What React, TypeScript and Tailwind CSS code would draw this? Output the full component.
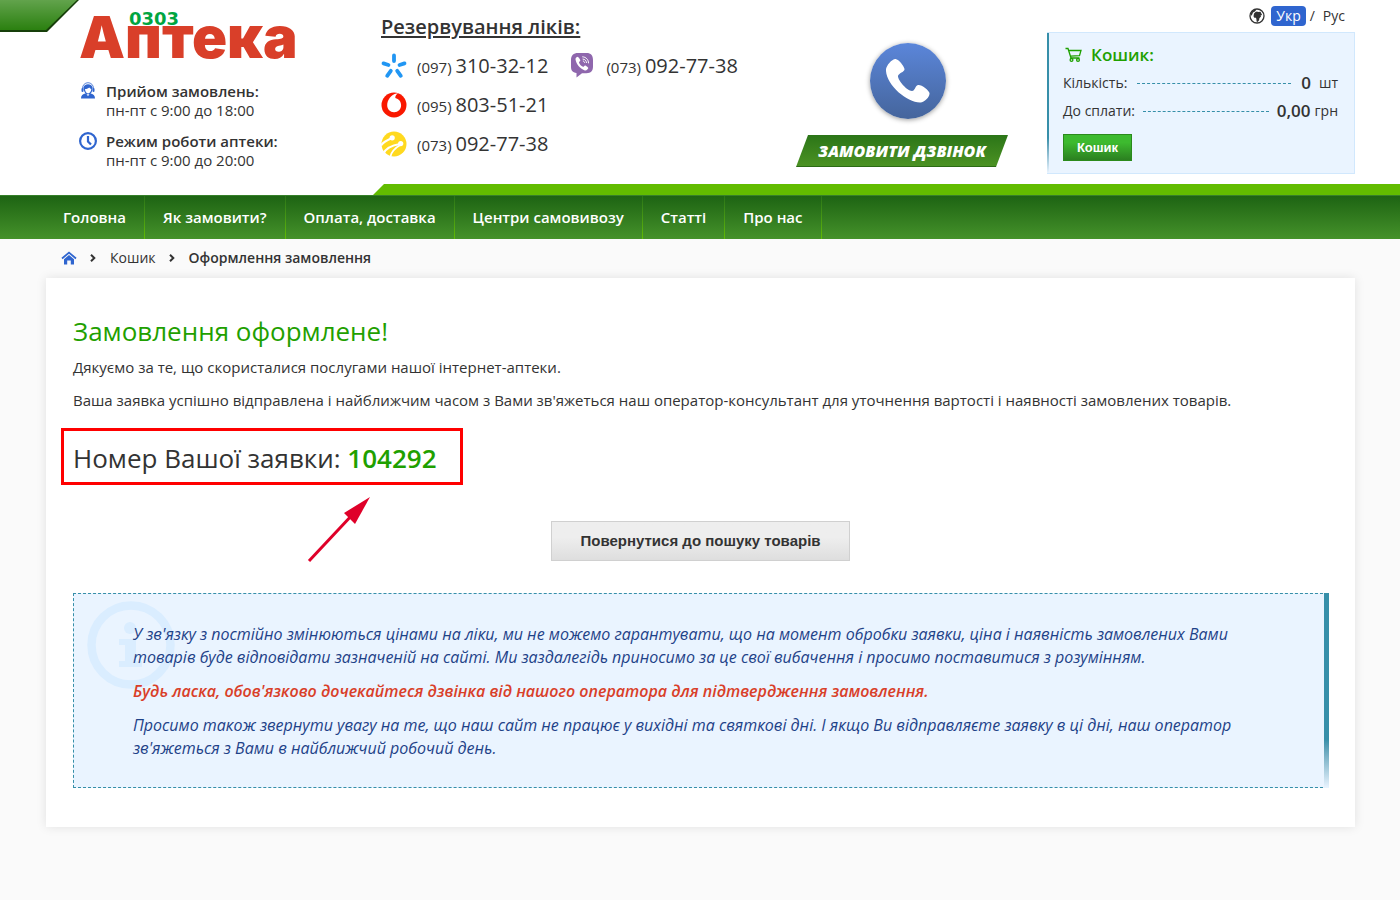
import { ReactNode } from 'react';

const navLinks = ['Головна', 'Як замовити?', 'Оплата, доставка', 'Центри самовивозу', 'Статті', 'Про нас'];

interface PhoneProps {
  icon: ReactNode;
  code: string;
  number: string;
}

function Phone({ icon, code, number }: PhoneProps) {
  return (
    <a href={`tel:${code}${number}`} className="flex h-[39px] items-center">
      <span className="w-9">{icon}</span>
      <span className="text-[15px]">
        ({code}) <span className="text-xl">{number}</span>
      </span>
    </a>
  );
}

function KyivstarIcon() {
  return (
    <svg width="26" height="26" viewBox="0 0 26 26" stroke="#2196f3" strokeWidth="3.8" strokeLinecap="round">
      <path d="M13 2.5v5.5M2.5 10.4l5 1.6M23.5 10.4l-5 1.6M9.8 17.8l-3.6 5M16.2 17.8l3.6 5" />
    </svg>
  );
}

function VodafoneIcon() {
  return (
    <svg width="26" height="26" viewBox="0 0 26 26">
      <circle cx="13" cy="13" r="12.5" fill="#f91800" />
      <path
        d="M13.2 20.2C9.3 20.3 6.2 17.3 6.2 13.2c0-5.3 4-10.8 9.3-11.7.8-.1 1.3 0 1.8.1-1.7.4-3.1 2.1-3 4.300 3.500.9 5.800 3.500 5.800 7.300 0 4.200-3 6.900-6.900 7z"
        fill="#fff"
      />
    </svg>
  );
}

function LifecellIcon() {
  return (
    <svg width="26" height="26" viewBox="0 0 26 26" fill="none">
      <circle cx="13" cy="13" r="12.5" fill="#ffd91f" />
      <path d="M0 14.5C2 11 5.500 9.500 11 7" stroke="#fff" strokeWidth="2.2" />
      <path d="M2.5 22.5C5 17 10 14.500 19 13" stroke="#fff" strokeWidth="2.2" />
      <path d="M9.5 25.5C10.500 20 14 17 20 13.500" stroke="#fff" strokeWidth="1.8" />
      <circle cx="11.2" cy="6.8" r="2.6" fill="#fff" />
      <circle cx="19.7" cy="12.6" r="2.6" fill="#fff" />
    </svg>
  );
}

function ViberIcon() {
  return (
    <svg width="26" height="26" viewBox="0 0 26 26" fill="none">
      <path
        d="M8 0h8.500C21 0 23 2.500 23 7v6.500c0 4.500-2 6.500-6.500 6.700h-4.500L6.500 24.500v-4.500C2.500 19.500 1 17.500 1 13.500V7c0-4.500 2.500-7 7-7z"
        fill="#8f67ad"
      />
      <path
        d="M7.500 3.700c-1.200.4-2.200 1.600-2 2.900 1 5 4 8.700 9.300 10.800 1.500.5 3.300-1 3.500-2.300.1-.8-2.500-2.700-3.200-2.700-.9.100-1.200 1.500-2.100 1.300-2-.7-3.500-2.300-4-4.200-.2-.9 1.300-1.200 1.300-2.100.1-.8-1.900-3.700-2.800-3.700z"
        fill="#fff"
      />
      <path d="M12.300 3.800c3.700.2 6.200 2.700 6.200 6.500M12.600 6c2.400.2 3.800 1.700 3.900 4M12.900 8c1 .1 1.600.8 1.700 1.800" stroke="#fff" />
    </svg>
  );
}

function OperatorIcon() {
  return (
    <svg width="18" height="18" viewBox="0 0 18 18" fill="#2f65cf">
      <path d="M2 16.500c0-3 1.500-4.500 5-5.200l2 3 2-3c3.500.7 5 2.200 5 5.200z" />
      <path d="M4.500 5.500C5 3 7 2.300 9 2.300s4 .7 4.500 3.200c.2 3-1 5.800-2.800 6.700H7.500C5.600 11 4.300 8 4.500 5.500z" />
      <path d="M6 7c2 0 3.500-.6 4.300-1.500.5.800 1.200 1.200 2 1.400-.2 2.300-1.400 4.400-3.200 4.500C7.300 11.400 6.100 9.300 6 7z" fill="#fff" />
      <path d="M3.500 6.500C3.500 3 6 .7 9 .7s5.500 2.300 5.500 5.800" fill="none" stroke="#2f65cf" strokeWidth=".8" />
      <rect x="2.5" y="6" width="2" height="4" rx="1" />
      <rect x="13.5" y="6" width="2" height="4" rx="1" />
    </svg>
  );
}

function ClockIcon() {
  return (
    <svg width="18" height="18" viewBox="0 0 18 18" fill="none" stroke="#2f65cf" strokeWidth="2.2">
      <circle cx="9" cy="9" r="7.9" />
      <path d="M9 4v5.500l3 3" />
    </svg>
  );
}

function GlobeIcon() {
  return (
    <svg width="16" height="16" viewBox="0 0 16 16" fill="#333">
      <circle cx="8" cy="8" r="7" fill="#fff" stroke="#333" strokeWidth="1.3" />
      <path d="M6.500 4 8 3.500l1 .5 2.500-.2 1.700 3.400-1.500-.3.300 1.600-1.600 1.700-.3 2-1.500 1.800-1-.4-.2-2.500-.5-1.300H5.300L4.500 8.200 5 5.500z" />
      <path d="M1.500 6 3 3.200 6 1.500l1 1-1.500 1.200L4 4.500 3.200 6.500 2 8z" />
    </svg>
  );
}

function CartIcon() {
  return (
    <svg width="18" height="16" viewBox="0 0 18 16" fill="none" stroke="#1fa000" strokeWidth="1.3">
      <path d="M.5 1.500H3L6 11h8.500M3.700 3.500H16l-1.500 5.200-9 .4" />
      <circle cx="6.5" cy="12.9" r="1.4" />
      <circle cx="13" cy="12.9" r="1.4" />
    </svg>
  );
}

function HomeIcon() {
  return (
    <svg width="16" height="14" viewBox="0 0 16 14">
      <path d="M1 7.500 8 1.600l7 5.900" fill="none" stroke="#2f65cf" strokeWidth="1.8" />
      <path d="M3 8.200 8 4l5 4.200V13.500H9.800V9.500H6.200v4H3z" fill="#2f65cf" />
    </svg>
  );
}

function Chevron() {
  return (
    <svg width="6" height="8" viewBox="0 0 6 8" fill="none" stroke="#333" strokeWidth="2">
      <path d="m1 .8 3.300 3.200L1 7.200" />
    </svg>
  );
}

function Header() {
  return (
    <header className="relative flex h-[184px] pr-[45px] pl-[79px]">
      <svg className="absolute top-0 left-0" width="80" height="33" viewBox="0 0 80 33">
        <defs>
          <linearGradient id="corner" x1="0" y1="0" x2="0" y2="1">
            <stop offset="0" stopColor="#62a34c" />
            <stop offset="1" stopColor="#2b8010" />
          </linearGradient>
        </defs>
        <path d="M0 0h79L47 32H0z" fill="#173f0a" />
        <path d="M0 0h77L46 30H0z" fill="url(#corner)" />
      </svg>

      <div className="w-[302px] shrink-0">
        <a
          href="#"
          className="relative block h-[82px] font-['Inter',sans-serif] text-[58px] leading-[74px] font-black text-[#d93f29]"
        >
          Аптека
          <span className="absolute top-[9px] left-[50px] font-['DejaVu_Sans',sans-serif] text-lg leading-5 font-bold text-[#00a541]">
            0303
          </span>
        </a>
        <div className="flex text-[15px] leading-[19px]">
          <span className="w-[27px]">
            <OperatorIcon />
          </span>
          <p>
            <b className="font-semibold">Прийом замовлень:</b>
            <br />
            пн-пт с 9:00 до 18:00
          </p>
        </div>
        <div className="mt-3 flex text-[15px] leading-[19px]">
          <span className="w-[27px]">
            <ClockIcon />
          </span>
          <p>
            <b className="font-semibold">Режим роботи аптеки:</b>
            <br />
            пн-пт с 9:00 до 20:00
          </p>
        </div>
      </div>

      <div className="shrink-0 pt-3">
        <h2 className="text-xl leading-[30px] font-semibold underline underline-offset-2">Резервування ліків:</h2>
        <div className="mt-1 flex gap-[22px]">
          <div>
            <Phone icon={<KyivstarIcon />} code="097" number="310-32-12" />
            <Phone icon={<VodafoneIcon />} code="095" number="803-51-21" />
            <Phone icon={<LifecellIcon />} code="073" number="092-77-38" />
          </div>
          <Phone icon={<ViberIcon />} code="073" number="092-77-38" />
        </div>
      </div>

      <div className="flex flex-1 flex-col items-end pt-[43px] pr-[39px]">
        <a href="#" className="flex flex-col items-center">
          <span className="ml-3 flex size-[76px] items-center justify-center rounded-full bg-linear-to-b from-[#5b86da] to-[#45659c] shadow-[0_1px_5px_rgba(0,0,0,0.4)]">
            <svg width="44" height="44" viewBox="0 0 44 44" fill="#fff">
              <path d="M0 10C1 6 5 1 9 0c3-.5 9 7 9.500 10 .3 3-6 4-6.500 7-.5 4 9 15 14 15 3 0 3-5 6-6 3-.8 11 5 11.500 8 .4 4-5 9-9 9.500C21 44-1 25 0 10z" />
            </svg>
          </span>
          <span className="mt-4 flex h-8 w-[212px] items-center justify-center border-b border-[#2b6b14] bg-linear-to-b from-[#2b7518] to-[#4b9223] text-base font-extrabold text-white italic [clip-path:polygon(12px_0,100%_0,200px_100%,0_100%)]">
            ЗАМОВИТИ ДЗВІНОК
          </span>
        </a>
      </div>

      <div className="w-[308px] shrink-0 pt-1.5">
        <div className="flex h-5 items-center justify-end pr-2.5 text-sm">
          <GlobeIcon />
          <a href="#" className="ml-1.5 rounded-sm bg-[#2f65cf] px-[5px] leading-5 text-white">
            Укр
          </a>
          <span className="mr-2 ml-1">/</span>
          <a href="#">Рус</a>
        </div>
        <div className="mt-1.5 flex h-[142px] border border-l-0 border-[#d1e8fd] bg-[#eaf4ff]">
          <div className="w-0.5 bg-linear-to-b from-[#368fa9] from-75% to-[#eaf4ff]" />
          <div className="flex-1 pt-2.5 pr-4 pl-3.5">
            <h3 className="flex h-6 items-center gap-2 pl-0.5 text-[17px] font-semibold text-[#1fa000]">
              <CartIcon />
              Кошик:
            </h3>
            <p className="mt-0.5 flex h-7 items-center text-sm">
              Кількість:
              <span className="mx-2.5 flex-1 border-t border-dashed border-[#368fa9]" />
              <b className="text-[17px] font-semibold">0</b>
              <span className="ml-2">шт</span>
            </p>
            <p className="flex h-7 items-center text-sm">
              До сплати:
              <span className="mx-2 flex-1 border-t border-dashed border-[#368fa9]" />
              <b className="text-[17px] font-semibold">0,00</b>
              <span className="ml-1">грн</span>
            </p>
            <button className="mt-[9px] h-[27px] w-[69px] border border-[#2b8a1c] bg-linear-to-b from-[#3dba2f] from-30% to-[#2b8020] font-['Liberation_Sans',sans-serif] text-[13px] font-bold text-white">
              Кошик
            </button>
          </div>
        </div>
      </div>
    </header>
  );
}

function Nav() {
  return (
    <nav>
      <div className="ml-[373px] h-[11px] bg-[#62bc00] [clip-path:polygon(11px_0,100%_0,100%_100%,0_100%)]" />
      <ul className="flex h-11 border-t border-[#36802a] bg-linear-to-b from-[#1d6413] to-[#45922a] pl-[45px]">
        {navLinks.map((link) => (
          <li key={link} className="flex">
            <a href="#" className="px-[18px] text-[15px] leading-[43px] font-semibold text-white">
              {link}
            </a>
            <span className="w-px bg-linear-to-b from-[#2b7518] to-[#62bc00]" />
          </li>
        ))}
      </ul>
    </nav>
  );
}

function Notice() {
  return (
    <div className="relative mt-8 border border-r-0 border-dashed border-[#368fa9] bg-[#eaf4ff] pt-[29px] pr-[70px] pb-[27px] pl-[59px] text-base leading-[23px] text-[#1e4288] italic">
      <svg className="absolute top-[7px] left-[13px]" width="88" height="88" viewBox="0 0 88 88" fill="#daedff">
        <circle cx="44" cy="44" r="39.5" fill="none" stroke="#daedff" strokeWidth="8.5" />
        <circle cx="43" cy="27" r="6" />
        <path d="M32 38h17v22h6v6H32v-6h6V44h-6z" />
      </svg>
      <div className="absolute -top-px -right-px -bottom-px w-[5px] bg-linear-to-b from-[#368fa9] from-75% to-[#eaf4ff]" />
      <p className="relative">
        У зв'язку з постійно змінюються цінами на ліки, ми не можемо гарантувати, що на момент обробки заявки, ціна і
        наявність замовлених Вами товарів буде відповідати зазначеній на сайті. Ми заздалегідь приносимо за це свої
        вибачення і просимо поставитися з розумінням.
      </p>
      <p className="relative mt-[11px] font-semibold text-[#d93f29]">
        Будь ласка, обов'язково дочекайтеся дзвінка від нашого оператора для підтвердження замовлення.
      </p>
      <p className="relative mt-[11px]">
        Просимо також звернути увагу на те, що наш сайт не працює у вихідні та святкові дні. І якщо Ви відправляєте
        заявку в ці дні, наш оператор зв'яжеться з Вами в найближчий робочий день.
      </p>
    </div>
  );
}

export default function App() {
  return (
    <div className="min-h-screen bg-[#fafafa] pb-[73px] font-['Open_Sans',sans-serif] text-[#333]">
      <div className="bg-white">
        <Header />
        <Nav />
      </div>

      <div className="flex h-[39px] items-center pb-0.5 pl-[61px] text-sm">
        <a href="#" aria-label="Головна">
          <HomeIcon />
        </a>
        <span className="mr-3.5 ml-[13px]">
          <Chevron />
        </span>
        <a href="#">Кошик</a>
        <span className="mr-3.5 ml-[13px]">
          <Chevron />
        </span>
        <span className="font-semibold">Оформлення замовлення</span>
      </div>

      <main className="mr-[45px] ml-[46px] bg-white px-[27px] pt-[35px] pb-[39px] shadow-[0_0_10px_rgba(0,0,0,0.1)]">
        <h1 className="text-[26px] leading-9 text-[#1fa000]">Замовлення оформлене!</h1>
        <p className="mt-[7px] text-[15px] leading-[23px]">
          Дякуємо за те, що скористалися послугами нашої інтернет-аптеки.
        </p>
        <p className="mt-2.5 text-[15px] leading-[23px]">
          Ваша заявка успішно відправлена і найближчим часом з Вами зв'яжеться наш оператор-консультант для уточнення
          вартості і наявності замовлених товарів.
        </p>
        <div className="relative mt-4 -ml-3 h-[57px] w-[402px] border-[3px] border-[#f00] pl-[9px] text-[26px] leading-[54px]">
          Номер Вашої заявки: <b className="font-semibold text-[#1fa000]">104292</b>
          <svg className="absolute top-[65px] left-[243px]" width="64" height="68" viewBox="0 0 64 68">
            <path d="M2 65 46 18" stroke="#df0029" strokeWidth="3" />
            <path d="M63 1 37 17l11 11z" fill="#df0029" />
          </svg>
        </div>
        <div className="mt-9 flex justify-center">
          <button className="h-10 w-[299px] border border-[#d0d0d0] bg-linear-to-b from-[#eee] from-40% to-[#dedede] font-['Liberation_Sans',sans-serif] text-[15px] font-bold">
            Повернутися до пошуку товарів
          </button>
        </div>
        <Notice />
      </main>
    </div>
  );
}
